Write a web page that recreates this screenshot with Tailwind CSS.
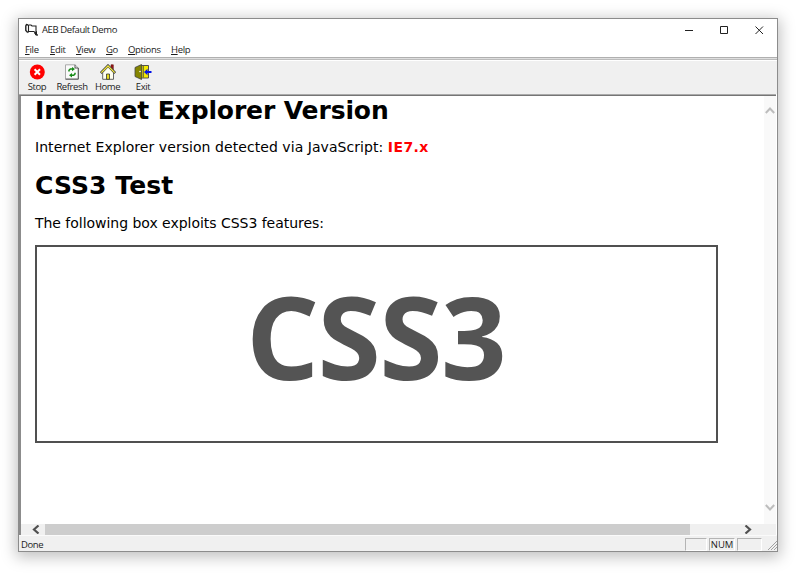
<!DOCTYPE html>
<html lang="en">
<head>
<meta charset="utf-8">
<title>AEB Default Demo</title>
<script src="https://cdn.jsdelivr.net/npm/@tailwindcss/browser@4"></script>
</head>
<body class="bg-white w-[800px] h-[575px] overflow-hidden pt-[18px] pl-[18px]">
<div class="w-[760px] h-[534px] border border-[#8c8c8c] bg-white flex flex-col shadow-[0_3px_14px_2px_rgba(0,0,0,0.25)] text-[#1c1c1c] text-[9.5px] tracking-[-0.4px] font-['Open_Sans',sans-serif] whitespace-nowrap">
  <header class="h-[22px] shrink-0 flex items-center pl-[6px]">
    <svg class="w-[14px] h-[14px]" viewBox="0 0 14 14" fill="none" stroke="#222"><path d="M3 2 1.500 1.500.8 3V7.500L2.500 9.300" stroke-width="1.400"/><path d="M3.500 1.800V8.500L2.500 9.800M3.500 2H6L7 3H11V9.500M3.500 8.500H9L10.500 10.500" stroke-width="1.100"/><path d="M9.800 10l1.700-1.500v2.800l1.300.8h-2z" fill="#222"/></svg>
    <h1 class="ml-[3px] text-[9.5px]">AEB Default Demo</h1>
    <svg class="ml-auto w-[92px] h-[22px]" viewBox="0 0 92 22" fill="none" stroke="#222" stroke-width="1"><path d="M0 11.500H8M35.500 7.500h7v7h-7zM70.500 7.500l7.500 7.500M78 7.500l-7.500 7.500"/></svg>
  </header>
  <nav class="h-[16px] shrink-0 leading-[17px]">
    <ul class="flex pl-[6px] tracking-[-0.35px]">
      <li class="w-[25px]"><u>F</u>ile</li><li class="w-[26px]"><u>E</u>dit</li><li class="w-[30px]"><u>V</u>iew</li><li class="w-[22px]"><u>G</u>o</li><li class="w-[43px]"><u>O</u>ptions</li><li><u>H</u>elp</li>
    </ul>
  </nav>
  <div class="h-[3px] shrink-0 bg-[#dedede] border-t border-b border-t-[#b0b0b0] border-b-[#bcbcbc]"></div>
  <div class="h-[34px] shrink-0 bg-[#f0f0f0] flex pl-[1px] leading-[13px] border-t border-white text-center">
    <div class="w-[34px] flex flex-col items-center pt-[3px]">
      <svg class="w-4 h-4" viewBox="0 0 16 16"><circle cx="8.300" cy="8" r="7.500" fill="#f00"/><path d="M5.600 5.300l5.400 5.400M11 5.300l-5.400 5.400" stroke="#fff" stroke-width="2"/></svg>
      <span>Stop</span></div>
    <div class="w-[36px] flex flex-col items-center pt-[3px]">
      <svg class="w-4 h-4" viewBox="0 0 16 16"><path d="M1.500 .8H11L14.300 4V15H1.500z" fill="#fafafa" stroke="#aaa"/><path d="M11 .8V4h3.300M14.300 4V15.200H1.500" fill="none" stroke="#555"/><path d="M5 7.500V6.300L6.300 5H8.500M11 8.800V10L9.700 11.300H7.500" fill="none" stroke="#158a15" stroke-width="1.500"/><path d="M8 3 11 5 8 7.300zM8 9 5 11.300l3 2.300z" fill="#158a15"/></svg>
      <span>Refresh</span></div>
    <div class="w-[35px] flex flex-col items-center pt-[3px]">
      <svg class="w-4 h-4" viewBox="0 0 16 16"><path d="M11 .8H13.300V6L11 4z" fill="#a01818" stroke="#601010" stroke-width=".6"/><path d="M2.700 8.500 8 3l5.500 5.500V15.300H2.700z" fill="#fffff0" stroke="#555" stroke-width=".9"/><path d="M.8 9 8 1.700l7.200 7.300" fill="none" stroke="#444" stroke-width="2.600"/><path d="M1.300 8.600 8 2l6.700 6.600" fill="none" stroke="#f2e63a" stroke-width="1.300"/><path d="M6.500 10h3v5.300h-3z" fill="#e8dc20" stroke="#333" stroke-width=".8"/></svg>
      <span>Home</span></div>
    <div class="w-[36px] flex flex-col items-center pt-[3px]">
      <svg class="w-[18px] h-4" viewBox="0 0 18 16"><path d="M6 1.500h8.500v12.500H6z" fill="#f4ea00" stroke="#444" stroke-width=".9"/><path d="M1 3.500 7.500.5V15.500L1 12.500z" fill="#858500" stroke="#444" stroke-width=".8"/><path d="M9.200 2v11.500" stroke="#444"/><circle cx="6" cy="7.500" r=".8" fill="#fff"/><path d="M10 8l3.500-3.300V6.900h4v2.200h-4v2.200z" fill="#0010e8"/></svg>
      <span>Exit</span></div>
  </div>
  <div class="h-px shrink-0 w-[757px] bg-[#aaaaaa]"></div>
  <div class="h-[440px] shrink-0 w-[757px] flex flex-col border-t border-l-2 border-t-[#757575] border-l-[#8c8c8c]">
    <div class="flex min-h-0 grow">
      <main class="w-[744px] pl-[14px] font-['DejaVu_Sans',sans-serif] text-black tracking-normal">
        <h2 class="text-[25px] leading-[30px] h-[30px] font-bold tracking-[-0.12px]">Internet Explorer Version</h2>
        <p class="text-[14px] leading-[20px] mt-[11px] tracking-[0.06px]">Internet Explorer version detected via JavaScript: <b class="text-[#f00] tracking-[0.4px]">IE7.x</b></p>
        <h2 class="text-[25px] leading-[30px] mt-[14px] font-bold tracking-[0.1px]">CSS3 Test</h2>
        <p class="text-[14px] leading-[20px] mt-[12px] tracking-[-0.03px]">The following box exploits CSS3 features:</p>
        <div class="mt-[12px] w-[683px] h-[198px] border-2 border-[#505050] flex items-center justify-center pb-[17px] pr-[2px]"><span class="font-['Open_Sans',sans-serif] font-bold text-[115px] tracking-[-1.7px] leading-none text-[#545454]">CSS3</span></div>
      </main>
      <div class="w-[12px] bg-[#f9f9f9] flex flex-col justify-between items-center pt-[10px] pb-[12px]">
        <svg class="w-[10px] h-[9px]" viewBox="0 0 10 9" fill="none" stroke="#bdbdbd" stroke-width="2"><path d="M.8 7 5 2.500 9.200 7"/></svg>
        <svg class="w-[10px] h-[9px]" viewBox="0 0 10 9" fill="none" stroke="#bdbdbd" stroke-width="2"><path d="M.8 2 5 6.500 9.200 2"/></svg>
      </div>
    </div>
    <div class="h-[11px] shrink-0 bg-[#f0f0f0] flex items-center">
      <svg class="ml-[11px] w-[8px] h-[9px]" viewBox="0 0 8 9" fill="none" stroke="#505050" stroke-width="2.200"><path d="M6.500 .5 2 4.500l4.500 4"/></svg>
      <div class="ml-[5px] w-[645px] h-full bg-[#cdcdcd]"></div>
      <svg class="ml-[54px] w-[8px] h-[9px]" viewBox="0 0 8 9" fill="none" stroke="#505050" stroke-width="2.200"><path d="M1.500 .5 6 4.500l-4.500 4"/></svg>
    </div>
  </div>
  <footer class="grow bg-[#f0f0f0] border-t border-[#fafafa] flex pl-[2px] pt-[2px] leading-[13px]">
    <span>Done</span>
    <div class="ml-auto flex gap-[2px] h-[13px]">
      <div class="w-[22px] border-t border-l border-[#b4b4b4] border-r border-b border-r-white border-b-white"></div>
      <div class="w-[26px] border-t border-l border-[#b4b4b4] border-r border-b border-r-white border-b-white text-center leading-[12px] tracking-[-0.1px]">NUM</div>
      <div class="w-[25px] border-t border-l border-[#b4b4b4] border-r border-b border-r-white border-b-white"></div>
    </div>
    <svg class="ml-[5px] w-[10px] h-[12px]" viewBox="0 0 10 12" fill="none" stroke="#a0a0a0"><path d="M1 12 10 3M4 12l6-6M7 12l3-3"/></svg>
  </footer>
</div>
</body>
</html>
